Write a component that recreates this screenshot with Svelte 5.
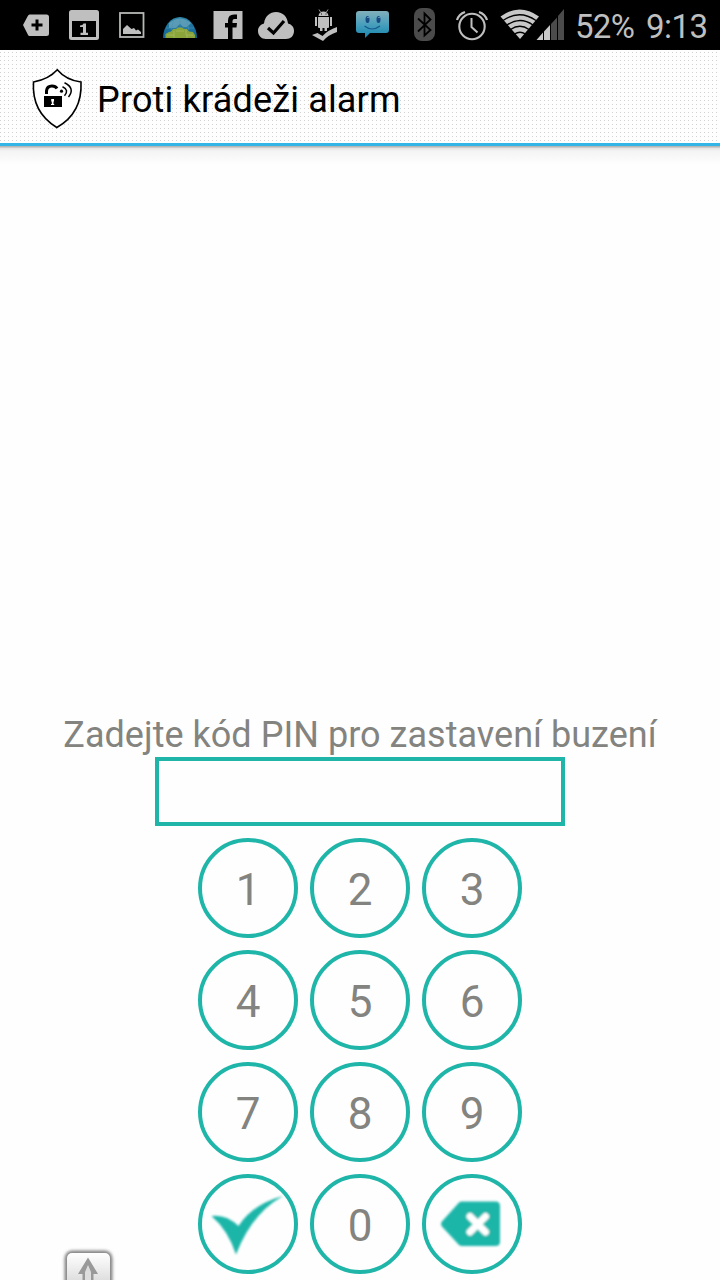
<script>
  const keys = ['1', '2', '3', '4', '5', '6', '7', '8', '9', 'ok', '0', 'del'];
</script>

<div class="screen">
  <header class="status">
    <svg class="cell" viewBox="12 0 48 50"><path fill="#bfbfbf" fill-rule="evenodd" d="M29.500 14.500H46.500Q49 14.500 49 17V33.500Q49 36 46.500 36H29.500Q28.500 36 27.800 34.500L23 25L27.800 16Q28.500 14.500 29.500 14.500ZM35.500 19.500V23.500H31.500V26.500H35.500V30.500H38.500V26.500H42.500V23.500H38.500V19.500Z" /></svg>
    <svg class="cell" viewBox="60 0 48 50"><rect x="69" y="10" width="30" height="30" rx="2.500" fill="#bfbfbf" /><path d="M72 21H96V37H72Z" /><path fill="#bfbfbf" d="M80 25.500Q83 25.300 83.500 23.500H86V32.700H88V35H80.500V32.700H83V27H80Z" /></svg>
    <svg class="cell" viewBox="108 0 48 50"><rect x="120" y="13" width="23.500" height="24" fill="none" stroke="#b5b8b5" stroke-width="1.800" /><path fill="#bfbfbf" d="M123 34V29L127 25L131.500 29L134 28L136 30.500L138 29.500L141 32V34Z" /></svg>
    <svg class="cell" viewBox="156 0 48 50">
      <defs><linearGradient id="dome" x2="0" y2="1"><stop stop-color="#2781a4" /><stop offset="1" stop-color="#126397" /></linearGradient></defs>
      <path fill="url(#dome)" d="M163 38A17 21 0 0 1 197 38Z" />
      <path fill="#73a9bd" opacity=".7" d="M169 23Q180 14 191 23L187 27H183L180 24L176 28H169Z" />
      <path fill="none" stroke="#4b96b5" stroke-width=".6" d="M166 28H194M174 19L171 30M180 17V29M186 19L189 30" />
      <path fill="#8aa63b" d="M165.500 38V34L169 32L171 31.500L173 29H176L178 27.500H182L184 29H187L189 31.500L193 32L195 35V38Z" />
      <path fill="none" stroke="#acbc67" stroke-width=".7" d="M167 35H174V31M174 38V35M186 30V35H193M176 31H184M187 38V35" />
    </svg>
    <svg class="cell" viewBox="204 0 48 50"><path fill="#bfbfbf" d="M213.500 11H242.500V39H213.500Z" /><path d="M228 39V27.500H225V23H228V20.500Q228 14.500 234 14.500H237V19H234.500Q232.500 19 232.500 21V23H237L236.500 27.500H232.500V39Z" /></svg>
    <svg class="cell" viewBox="252 0 48 50"><path fill="#bfbfbf" d="M266 39C261.500 39 258 35.500 258 31C258 27 260.500 24.500 264 23.500C265 16 270 12 276 12C283 12 287.500 17 288 23.500C292 24.500 294 27.500 294 31C294 36 290.500 39 286 39Z" /><path fill="none" stroke="#000" stroke-width="3.200" d="M268 28L273.500 33L284 21" /></svg>
    <svg class="cell" viewBox="300 0 48 50">
      <path fill="#bfbfbf" d="M318.500 16Q319 11.500 323.500 11.500T328.500 16ZM318 17H329V27Q329 28 328 28H327V31H324.500V28H322.500V31H320V28H319Q318 28 318 27ZM315 17H317V26H315ZM330 17H332V26H330ZM312 35L317.500 33L322.500 36Q328 30 337 27V32Q328 35 323 41Z" />
      <path stroke="#bfbfbf" stroke-width=".8" d="M319 9.500L320.500 12M328 9.500L326.500 12" /><path stroke="#111" stroke-width="1" d="M321 14H322M325.500 14H326.500" />
    </svg>
    <svg class="cell" viewBox="348 0 48 50">
      <defs><linearGradient id="bubble" x2="0" y2="1"><stop stop-color="#82b0ba" /><stop offset=".5" stop-color="#489fbc" /><stop offset="1" stop-color="#1685ae" /></linearGradient></defs>
      <path fill="url(#bubble)" d="M359 11H386Q389 11 389 14V30Q389 33 386 33H370L365 38V33H359Q356 33 356 30V14Q356 11 359 11Z" />
      <ellipse cx="367.500" cy="19.500" rx="2" ry="3.600" fill="#164b83" /><ellipse cx="378.500" cy="19.500" rx="2" ry="3.600" fill="#164b83" /><path fill="none" stroke="#16598e" stroke-width="1.200" d="M364.500 26Q372 32 380 26" /><path stroke="#b6d7df" d="M368 17V18M379 17V18" />
    </svg>
    <svg class="cell right" viewBox="400 0 48 50"><rect x="414" y="8" width="21" height="33" rx="8" fill="#4b4b4b" /><path fill="none" stroke="#000" stroke-width="1.800" d="M418 18.500L430.500 30L424.500 35.500V13.500L430.500 19.500L418 31.500" /></svg>
    <svg class="cell" viewBox="448 0 48 50"><g fill="none" stroke="#bfbfbf"><circle cx="472" cy="26.500" r="12.700" stroke-width="2.100" /><path stroke-width="2" d="M471.500 18V27L477.500 32.500" /><path stroke-width="2.300" d="M457 20Q459 14 465 12M479 12Q485 14 487 20" /></g></svg>
    <svg class="wifi" viewBox="496 0 72 50">
      <path fill="#c8c8c8" d="M500.500 16.500Q519.500 2.500 539 16.500L520 39Z" />
      <g fill="none" stroke="#000" stroke-width="1.400"><path d="M503 20.500Q519.500 9 536 20.500M507 25Q520 16 533 25M510.500 29.500Q520 23 529 29.500M514.500 34Q520 30.500 525.500 34" /></g>
      <path fill="#c8c8c8" d="M536.500 40L543 32.500V40ZM544 40V31.500L550 25V40Z" /><path fill="#4b4b4b" d="M551 40V24L557 17.500V40ZM558 40V16L564 9V40Z" />
    </svg>
    <span class="battery">52%</span><span class="clock">9:13</span>
  </header>

  <div class="titlebar">
    <svg class="shield" viewBox="30 66 56 66">
      <path fill="#fff" stroke="#000" stroke-width="1.600" d="M57.300 69.700Q49 79 33.500 82Q31.500 112 56.800 127.500Q82.500 113 81 82Q66 80 57.300 69.700Z" />
      <path d="M44 96H62V107H44Z" /><path fill="none" stroke="#000" stroke-width="3" d="M46.500 94V91Q47 86 52 86Q55.500 86 57 88.500" />
      <circle cx="61.500" cy="91.200" r="1.600" /><g fill="none" stroke="#000" stroke-width="1.500"><path d="M62.500 86.800Q69.500 90 64.500 95.800M64.500 82.700Q75.500 88 68.500 97" /></g>
      <path fill="#fff" d="M51.200 99H54V101L53.500 102V104H54.200V105H51V104H51.800V102L51.200 101Z" />
    </svg>
    <h1>Proti krádeži alarm</h1>
  </div>
  <div class="shade"></div>

  <main>
    <p>Zadejte kód PIN pro zastavení buzení</p>
    <div class="pin"></div>
    <div class="pad">
      {#each keys as key}
        <button aria-label={key}>
          {#if key === 'ok'}
            <svg viewBox="198 1174 100 100"><defs><filter id="soft"><feGaussianBlur stdDeviation="1" /></filter></defs><path filter="url(#soft)" fill="#1fb6a9" d="M211.500 1216Q226 1214 238.500 1226Q253 1204 283 1196Q252 1213 236 1254.500Q228 1230 211.500 1216Z" /></svg>
          {:else if key === 'del'}
            <svg viewBox="422 1174 100 100"><g filter="url(#soft)"><path fill="#1fb6a9" d="M461 1201.500H495.500Q500 1201.500 500 1206V1241.500Q500 1246 495.500 1246H461L459 1245L441.500 1226Q440.500 1224 441.500 1222L459 1202.500Z" /><path stroke="#fff" stroke-width="7" stroke-linecap="round" d="M470 1216.500L485.500 1232M485.500 1216.500L470 1232" /></g></svg>
          {:else}{key}{/if}
        </button>
      {/each}
    </div>
  </main>
  <svg class="shift" viewBox="60 1246 56 34">
    <defs><linearGradient id="key" x2="0" y2="1"><stop stop-color="#fff" /><stop offset="1" stop-color="#ccc" /></linearGradient><filter id="halo" x="-20%" y="-20%" width="140%" height="140%"><feGaussianBlur stdDeviation="1.400" /></filter></defs>
    <rect x="64.500" y="1250.500" width="48" height="45" rx="8" fill="#858585" filter="url(#halo)" />
    <rect x="67" y="1253" width="43" height="43" rx="5" fill="url(#key)" />
    <path fill="#999" d="M88 1257.500L98 1274H93.500V1285H82.500V1274H78Z" /><path fill="#ddd" d="M88 1265L91 1272V1285H85V1272Z" />
  </svg>
</div>

<style>
  :global(body) { background: #fefefe; }
  .screen { position: relative; width: 720px; height: 1280px; overflow: hidden; display: flex; flex-direction: column; background: #fefefe; font-family: Roboto, sans-serif; }
  svg { display: block; flex: none; }
  .status { height: 50px; background: #000; display: flex; padding-left: 12px; color: #bfbfbf; font-size: 33px; line-height: 53px; flex: none; }
  .cell { width: 48px; height: 50px; }
  .right { margin-left: 4px; }
  .wifi { width: 72px; height: 50px; }
  .battery { margin-left: 7px; width: 71px; white-space: nowrap; letter-spacing: -.7px; }
  .clock { white-space: nowrap; letter-spacing: -.5px; }
  .titlebar { height: 93px; box-sizing: border-box; flex: none; display: flex; align-items: center; padding-left: 30px; background: #fefefe radial-gradient(circle at .5px .5px, #d2d2d2 0 .6px, transparent .65px) 0 2px / 4px 4px; }
  .shield { width: 56px; height: 66px; margin-top: 5px; }
  h1 { margin: 6px 0 0 11px; font-size: 36px; line-height: 42px; letter-spacing: .17px; font-weight: 400; color: #000; white-space: nowrap; }
  .shade { height: 22px; flex: none; background: linear-gradient(#33b5e5 0 3px, #b5b5b5 3px 4px, #e2e2e2 5px, #f4f4f4 8px, #fefefe); }
  main { flex: 1; display: flex; flex-direction: column; align-items: center; padding-top: 549px; }
  p { margin: 0; height: 43px; line-height: 43px; font-size: 36px; letter-spacing: .03px; color: #83837f; white-space: nowrap; }
  .pin { box-sizing: border-box; width: 410px; height: 69px; border: 4px solid #1fb6a9; flex: none; }
  .pad { margin-top: 12px; display: grid; grid-template-columns: repeat(3, 100px); gap: 12px; }
  button { box-sizing: border-box; width: 100px; height: 100px; padding: 3px 0 0; border: 4px solid #1fb6a9; border-radius: 50%; background: transparent; color: #83837f; font: 400 44px/50px Roboto, sans-serif; display: flex; align-items: center; justify-content: center; }
  button svg { width: 100px; height: 100px; margin-top: -3px; }
  .shift { position: absolute; left: 60px; bottom: 0; width: 56px; height: 34px; }
</style>
